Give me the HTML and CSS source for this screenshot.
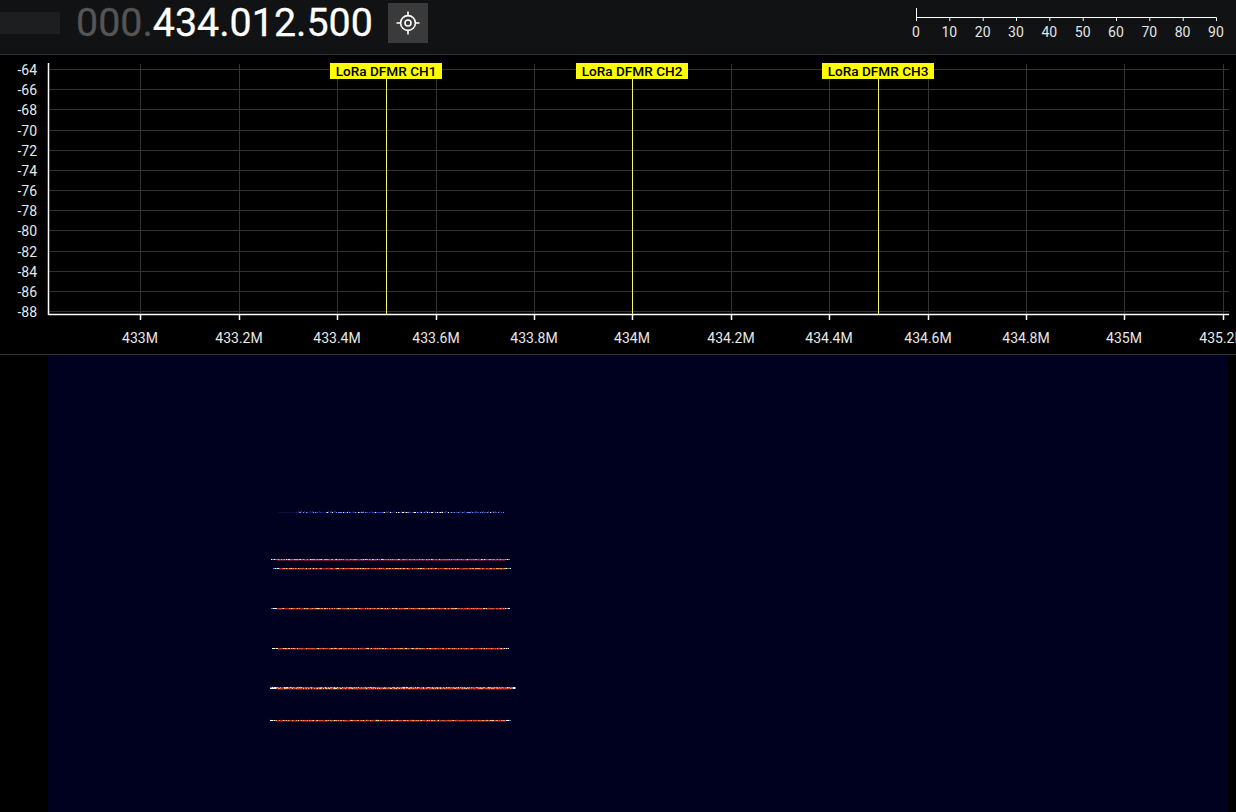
FILE: index.html
```html
<!DOCTYPE html>
<html>
<head>
  <meta name="viewport" content="width=device-width, initial-scale=1">
  <link rel="stylesheet" href="styles.css">
</head>
<body>
  <header class="topbar">
    <div class="source-slot"></div>
    <div class="freq"><span class="freq-lead">000.</span>434.012.500</div>
    <button class="center-btn" type="button">
      <svg width="24" height="24" viewBox="0 0 24 24" fill="none" stroke="#fff" stroke-width="1.6">
        <circle cx="12" cy="12" r="7.4"/>
        <circle cx="12" cy="12" r="3"/>
        <path d="M12 0.5V4.6M12 19.4V23.5M0.5 12H4.6M19.4 12H23.5"/>
      </svg>
    </button>
    <div class="snr">
      <svg class="snr-axis" width="304" height="14" viewBox="0 0 304 14" stroke="#fff" stroke-width="1">
        <path d="M2.5 0V13M2.5 9.5H302.5"/>
        <path d="M35.8 9.5V13M69.2 9.5V13M102.5 9.5V13M135.8 9.5V13M169.2 9.5V13M202.5 9.5V13M235.8 9.5V13M269.2 9.5V13M302.5 9.5V13"/>
      </svg>
      <div class="snr-labels">
        <span>0</span><span>10</span><span>20</span><span>30</span><span>40</span><span>50</span><span>60</span><span>70</span><span>80</span><span>90</span>
      </div>
    </div>
  </header>

  <section class="spectrum">
    <svg id="plot" width="1236" height="299" viewBox="0 0 1236 299"></svg>
  </section>

  <section class="waterfall">
    <canvas id="fall" width="1180" height="457"></canvas>
  </section>

  <script src="app.js"></script>
</body>
</html>
```

FILE: styles.css
```css
html, body {
  margin: 0;
  background: #000;
  overflow: hidden;
}
body {
  width: 1236px;
  height: 812px;
  font-family: Roboto, "Liberation Sans", sans-serif;
  color: #fff;
}
.topbar {
  height: 55px;
  box-sizing: border-box;
  display: flex;
  align-items: flex-start;
  background: #111213;
  border-bottom: 1px solid #333;
}
.source-slot {
  width: 60px;
  height: 22px;
  margin-top: 12px;
  background: #1c1e20;
}
.freq {
  margin: 0 0 0 16px;
  width: 312px;
  font-size: 39.4px;
  line-height: 46px;
  font-weight: 400;
  white-space: nowrap;
  -webkit-text-stroke: 0.3px currentColor;
}
.freq-lead {
  color: #555;
}
.center-btn {
  width: 40px;
  height: 40px;
  margin-top: 3px;
  padding: 0;
  border: none;
  background: #3a3a3a;
  display: flex;
  align-items: center;
  justify-content: center;
}
.snr {
  margin: 8px 0 0 486px;
  width: 304px;
}
.snr-axis {
  display: block;
}
.snr-labels {
  width: 300px;
  margin: 2px 0 0 2px;
  display: flex;
  justify-content: space-between;
  font-size: 14px;
  line-height: 16px;
  color: #e4e4e4;
}
.snr-labels span {
  width: 0;
  display: flex;
  justify-content: center;
}
.spectrum {
  height: 300px;
  box-sizing: border-box;
  border-bottom: 1px solid #333;
}
#plot {
  display: block;
}
.plot-grid {
  stroke: #333;
  stroke-width: 1;
}
.plot-axis {
  stroke: #fff;
  stroke-width: 1.5;
}
.plot-label {
  fill: #e8e8e8;
  font-family: Roboto, "Liberation Sans", sans-serif;
  font-size: 14px;
}
.marker-line {
  stroke: #f8f860;
  stroke-width: 1;
}
.marker-tag {
  fill: #ff0;
}
.marker-text {
  fill: #000;
  font-family: Roboto, "Liberation Sans", sans-serif;
  font-size: 13.6px;
  font-weight: 500;
}
.waterfall {
  height: 457px;
  padding-left: 48px;
}
#fall {
  display: block;
  filter: blur(0.35px);
}
```

FILE: app.js
```js
// Spectrum plot
const NS = 'http://www.w3.org/2000/svg';
const plot = document.getElementById('plot');
const TOP = 55; // plot svg starts under the top bar

function add(tag, attrs, text) {
  const el = document.createElementNS(NS, tag);
  for (const k in attrs) el.setAttribute(k, attrs[k]);
  if (text) el.textContent = text;
  plot.appendChild(el);
  return el;
}

const freqs = ['433M', '433.2M', '433.4M', '433.6M', '433.8M', '434M', '434.2M', '434.4M', '434.6M', '434.8M', '435M', '435.2M'];
const dbs = [-64, -66, -68, -70, -72, -74, -76, -78, -80, -82, -84, -86, -88];

dbs.forEach((db, i) => {
  const y = Math.round(69 + i * 20.17) + 0.5 - TOP;
  add('line', { class: 'plot-grid', x1: 48, x2: 1229, y1: y, y2: y });
  add('text', { class: 'plot-label', x: 37, y: y + 5, 'text-anchor': 'end' }, String(db));
});

freqs.forEach((f, i) => {
  const x = Math.round(140.3 + i * 98.4) + 0.5;
  add('line', { class: 'plot-grid', x1: x, x2: x, y1: 64 - TOP, y2: 314 - TOP });
  add('line', { class: 'plot-axis', x1: x, x2: x, y1: 314 - TOP, y2: 320 - TOP });
  add('text', { class: 'plot-label', x: x - 0.5, y: 343 - TOP, 'text-anchor': 'middle' }, f);
});

add('line', { class: 'plot-axis', x1: 48.5, x2: 48.5, y1: 63 - TOP, y2: 315 - TOP });
add('line', { class: 'plot-axis', x1: 48, x2: 1229, y1: 314.5 - TOP, y2: 314.5 - TOP });

[[386, 'LoRa DFMR CH1'], [632, 'LoRa DFMR CH2'], [878, 'LoRa DFMR CH3']].forEach(([x, name]) => {
  add('line', { class: 'marker-line', x1: x + 0.5, x2: x + 0.5, y1: 79 - TOP, y2: 314 - TOP });
  add('rect', { class: 'marker-tag', x: x - 56, y: 63 - TOP, width: 112, height: 16 });
  add('text', { class: 'marker-text', x: x, y: 76 - TOP, 'text-anchor': 'middle' }, name);
});

// Waterfall
const ctx = document.getElementById('fall').getContext('2d');
ctx.fillStyle = '#00001f';
ctx.fillRect(0, 0, 1180, 457);

let seed = 90210;
function rnd() {
  seed = (seed + 0x6D2B79F5) | 0;
  let t = Math.imul(seed ^ (seed >>> 15), 1 | seed);
  t = (t + Math.imul(t ^ (t >>> 7), 61 | t)) ^ t;
  return ((t ^ (t >>> 14)) >>> 0) / 4294967296;
}

function px(x, y, c) {
  ctx.fillStyle = c;
  ctx.fillRect(x - 48, y - 355, 1, 1);
}

function burstPixel() {
  const r = rnd();
  if (r < 0.1) return '#ffe9b0';
  if (r < 0.35) return '#f0a060';
  if (r < 0.8) return '#e05030';
  return '#a82a30';
}

function bluePixel() {
  const r = rnd();
  if (r < 0.12) return '#ffffff';
  if (r < 0.35) return '#7090e0';
  if (r < 0.7) return '#3040a0';
  return '#141860';
}

// y, start, end of each received packet
const bursts = [
  [559, 271, 509, 1],
  [568, 273, 510, 1],
  [608, 271, 509, 1],
  [648, 272, 508, 1],
  [687, 270, 515, 2],
  [720, 270, 510, 1]
];

bursts.forEach(([y, a, b, h]) => {
  for (let x = a; x <= b; x++) {
    const edge = x < a + 6 || x > b - 5;
    for (let row = 0; row < h; row++) {
      if (edge) px(x, y + row, rnd() < 0.6 ? '#ffffff' : '#6080e0');
      else px(x, y + row, burstPixel());
    }
    if (!edge) px(x, y + h, rnd() < 0.7 ? '#70182a' : '#3a0c36');
    if (rnd() < 0.1) px(x, y - 1, '#1a0a4a');
  }
});

// the weak one on top
for (let x = 278; x <= 503; x++) {
  const dim = x < 296;
  px(x, 512, dim ? '#0a0c40' : bluePixel());
  if (!dim && rnd() < 0.2) px(x, 511, '#202880');
}
```
